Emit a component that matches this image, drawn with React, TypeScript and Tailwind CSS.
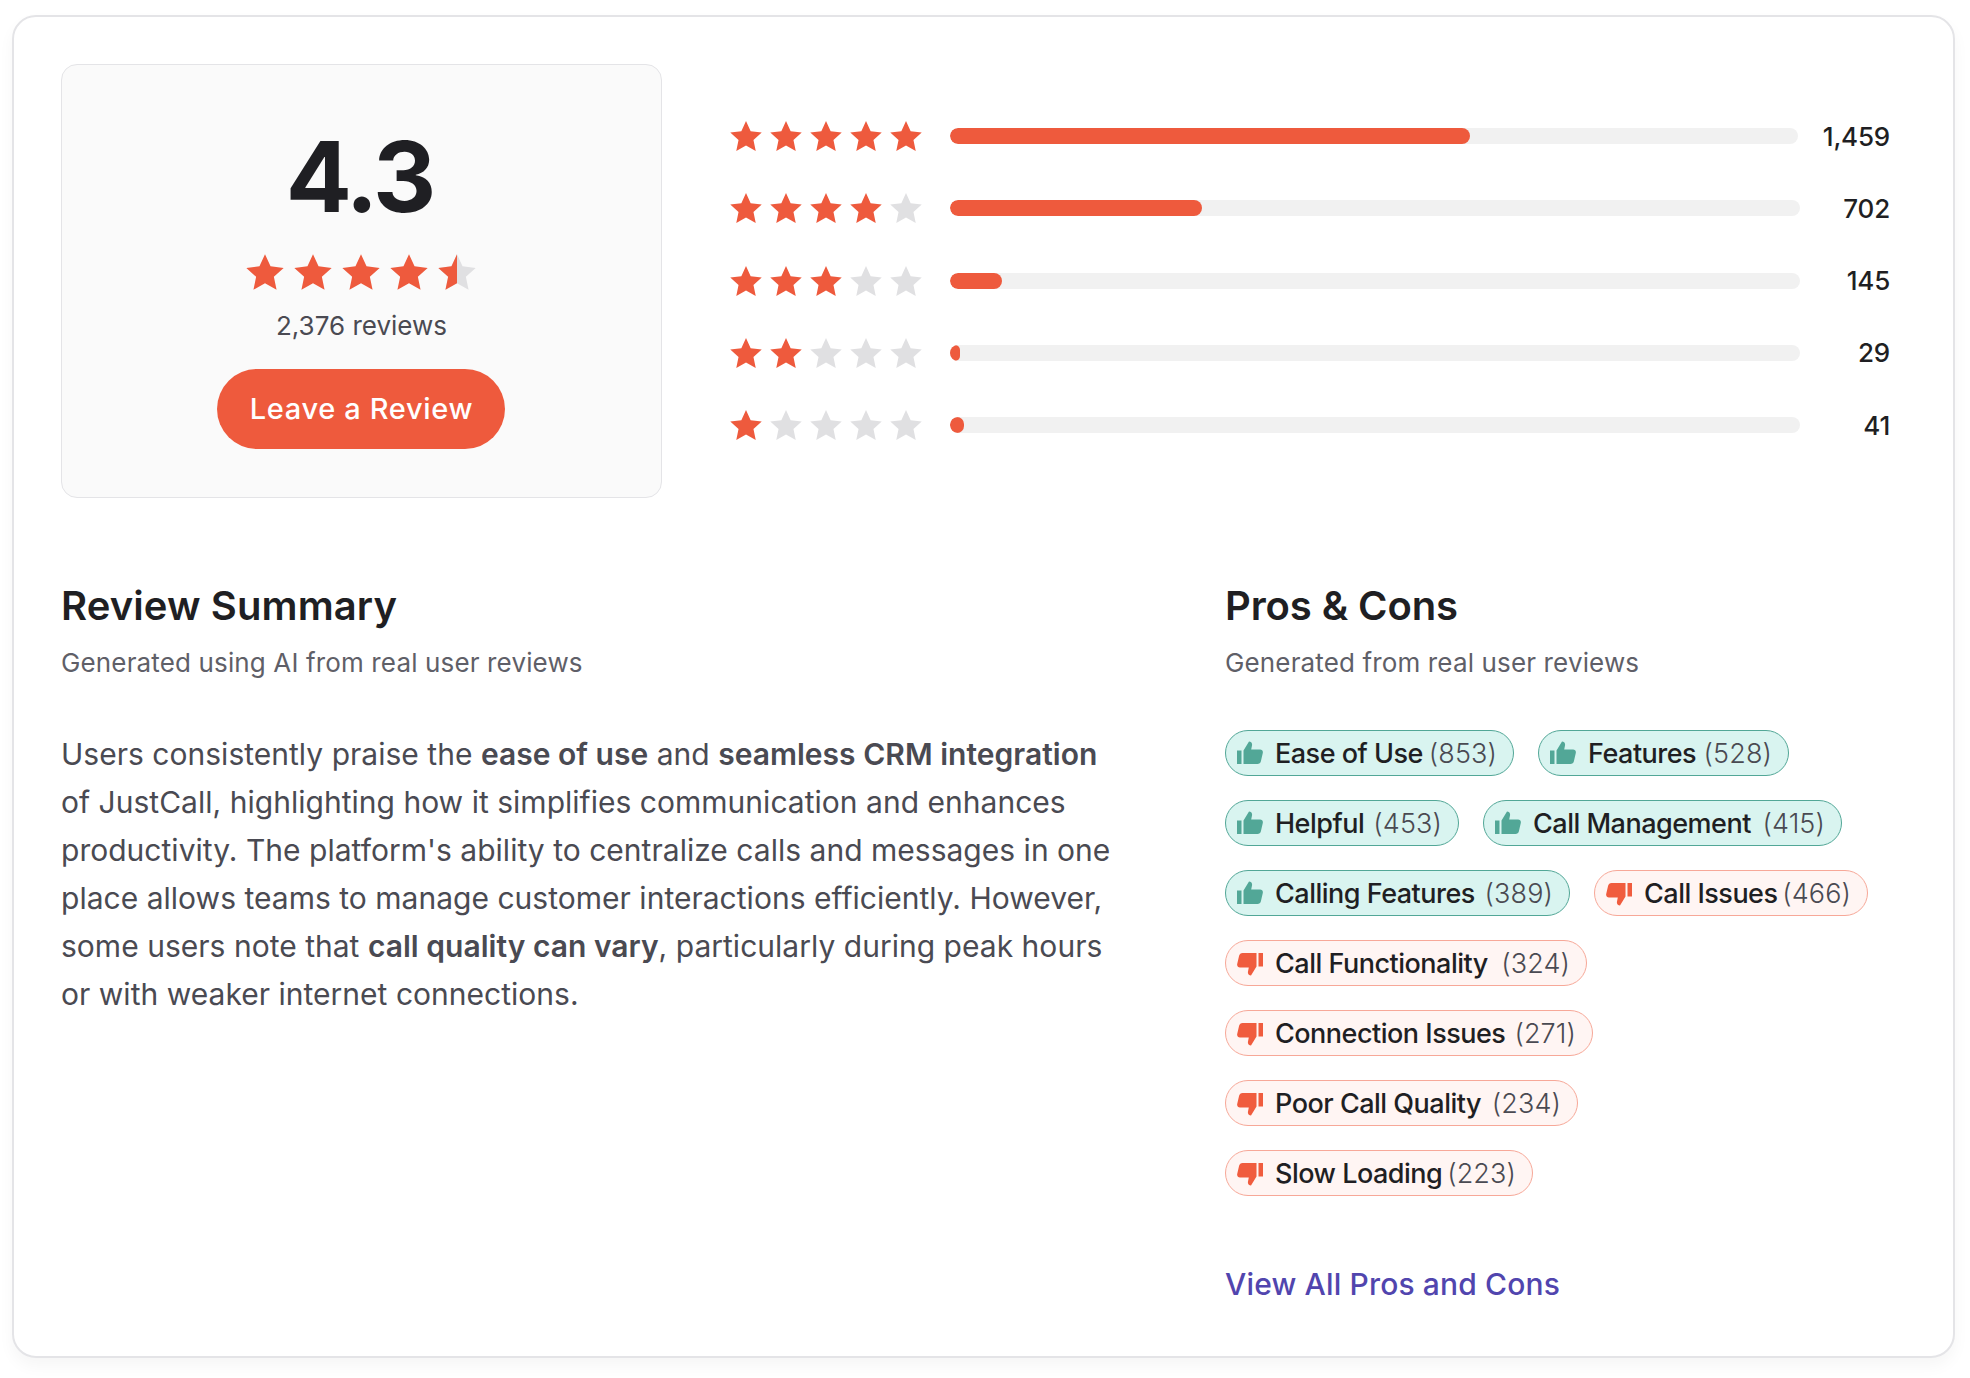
import React from 'react';

const font = { fontFamily: 'Inter, sans-serif' };

const STAR = 'M12 .8l3.5 7.6 8.3 1-6.2 5.6 1.7 8.2L12 19.1l-7.3 4.1 1.700-8.200L.2 9.400l8.300-1z';

const Star = ({ filled, half, className }: { filled?: boolean; half?: boolean; className?: string }) => (
  <svg viewBox="0 0 24 24" className={className}>
    <path d={STAR} fill={filled ? '#EE5A3D' : '#E0E0E2'} />
    {half && <path d="M12 .8v18.300l-7.300 4.100 1.700-8.200L.2 9.400l8.300-1z" fill="#EE5A3D" />}
  </svg>
);

const ThumbUp = () => (
  <svg viewBox="0 0 26 24" className="w-[26px] h-[24px] flex-shrink-0 -mt-[1px]">
    <path d="M0 9.500h4.500V23H0zM6.500 9.500 12 .5c2 0 3.500 1.500 3 4l-.8 4H23c2 0 3.200 1.500 2.800 3.400l-1.900 8.300c-.4 1.700-1.700 2.800-3.400 2.800H6.500z" fill="#52A797" />
  </svg>
);

const ThumbDown = () => (
  <svg viewBox="0 0 26 24" className="w-[26px] h-[24px] flex-shrink-0 mt-[2px]">
    <path d="M26 14.500h-4.500V1H26zM19.500 14.500 14 23.500c-2 0-3.500-1.500-3-4l.8-4H3c-2 0-3.200-1.500-2.800-3.400l1.900-8.300C2.500 2.100 3.800 1 5.500 1h14z" fill="#F05C3E" />
  </svg>
);

const rows = [
  { stars: 5, pct: 'w-[61.3%]', count: '1,459', track: 'w-[848px]' },
  { stars: 4, pct: 'w-[29.6%]', count: '702', track: 'w-[850px]' },
  { stars: 3, pct: 'w-[6.1%]', count: '145', track: 'w-[850px]' },
  { stars: 2, pct: 'w-[1.2%]', count: '29', track: 'w-[850px]' },
  { stars: 1, pct: 'w-[1.7%]', count: '41', track: 'w-[850px]' },
];

const pills: { label: string; n: number; good: boolean; w: string }[][] = [
  [{ label: 'Ease of Use', n: 853, good: true, w: 'w-[289px]' }, { label: 'Features', n: 528, good: true, w: 'w-[251px]' }],
  [{ label: 'Helpful', n: 453, good: true, w: 'w-[234px]' }, { label: 'Call Management', n: 415, good: true, w: 'w-[359px]' }],
  [{ label: 'Calling Features', n: 389, good: true, w: 'w-[345px]' }, { label: 'Call Issues', n: 466, good: false, w: 'w-[274px]' }],
  [{ label: 'Call Functionality', n: 324, good: false, w: 'w-[362px]' }],
  [{ label: 'Connection Issues', n: 271, good: false, w: 'w-[368px]' }],
  [{ label: 'Poor Call Quality', n: 234, good: false, w: 'w-[353px]' }],
  [{ label: 'Slow Loading', n: 223, good: false, w: 'w-[308px]' }],
];

const Pill = ({ label, n, good, w }: { label: string; n: number; good: boolean; w: string }) => (
  <div className={`h-[46px] rounded-full border flex items-center pl-[11px] pr-[16px] ${w} ${good ? 'bg-[#D9F4F0] border-[#52A797]' : 'bg-[#FFF5F3] border-[#F7A898]'}`}>
    {good ? <ThumbUp /> : <ThumbDown />}
    <span className="ml-[12px] mt-[2px] flex-1 text-[27px] tracking-[-0.5px] font-medium text-[#1F1F23] whitespace-nowrap">{label}</span>
    <span className="mt-[2px] text-[27px] tracking-[0.1px] font-light text-[#4A4A52] whitespace-nowrap">({n})</span>
  </div>
);

export default function App() {
  return (
    <div className="w-[1970px] h-[1378px] bg-white pt-[15px] pl-[12px]" style={font}>
      <div className="w-[1943px] h-[1343px] bg-white rounded-[24px] border-2 border-[#E4E4E7] shadow-[0_8px_16px_rgba(0,0,0,0.04)] pt-[47px] pl-[47px]">
        <div className="flex">
          <div className="w-[601px] h-[434px] flex-shrink-0 bg-[#FAFAFA] border border-[#E4E4E7] rounded-[16px] flex flex-col items-center">
            <div className="mt-[52px] mr-[4px] text-[98px] leading-[120px] font-bold tracking-[-3px] text-[#1F1F23]">4.3</div>
            <div className="mt-[16px] mr-[2px] flex gap-[10px]">
              {[0, 1, 2, 3].map(i => <Star key={i} filled className="w-[38px] h-[38px]" />)}
              <Star half className="w-[38px] h-[38px]" />
            </div>
            <div className="mt-[17px] text-[26px] leading-[36px] tracking-[0px] text-[#4A4A52]">2,376 reviews</div>
            <button className="mt-[25px] mr-[2px] pl-[2px] h-[80px] w-[288px] rounded-full bg-[#EE5A3D] text-white text-[29px] font-medium tracking-[0.65px]">Leave a Review</button>
          </div>
          <div className="ml-[68px] w-[1160px] flex flex-col pt-[56px] gap-[40.3px]">
            {rows.map(r => (
              <div key={r.count} className="flex items-center h-[32px]">
                <div className="flex gap-[8px] w-[216px] flex-shrink-0">
                  {[1, 2, 3, 4, 5].map(i => <Star key={i} filled={i <= r.stars} className="w-[32px] h-[32px]" />)}
                </div>
                <div className={`h-[16px] rounded-full bg-[#F1F1F1] overflow-hidden ml-[4px] ${r.track}`}>
                  <div className={`h-full rounded-full bg-[#EE5A3D] ${r.pct}`} />
                </div>
                <div className="flex-1 text-right text-[26px] font-medium tracking-[-0.2px] text-[#1F1F23]">{r.count}</div>
              </div>
            ))}
          </div>
        </div>
        <div className="flex mt-[83px]">
          <div className="w-[1164px] flex-shrink-0">
            <h2 className="text-[40px] leading-[50px] font-semibold tracking-[0.1px] text-[#1F1F23]">Review Summary</h2>
            <p className="mt-[14px] text-[26px] leading-[36px] tracking-[0.14px] text-[#5F5F68]">Generated using AI from real user reviews</p>
            <p className="mt-[49px] text-[30px] leading-[48px] tracking-[0.02px] text-[#4A4A52]">
              Users consistently praise the <b className="font-semibold">ease of use</b> and <b className="font-semibold">seamless CRM integration</b><br />
              of JustCall, highlighting how it simplifies communication and enhances<br />
              productivity. The platform's ability to centralize calls and messages in one<br />
              place allows teams to manage customer interactions efficiently. However,<br />
              some users note that <b className="font-semibold">call quality can vary</b>, particularly during peak hours<br />
              or with weaker internet connections.
            </p>
          </div>
          <div>
            <h2 className="text-[40px] leading-[50px] font-semibold tracking-[-0.1px] text-[#1F1F23]">Pros &amp; Cons</h2>
            <p className="mt-[14px] text-[26px] leading-[36px] tracking-[0.14px] text-[#5F5F68]">Generated from real user reviews</p>
            <div className="mt-[49px] flex flex-col gap-[24px]">
              {pills.map((row, i) => (
                <div key={i} className="flex gap-[24px]">
                  {row.map(p => <Pill key={p.label} {...p} />)}
                </div>
              ))}
            </div>
            <a className="block mt-[68px] text-[30px] leading-[40px] font-medium tracking-[0.15px] text-[#5145AE]">View All Pros and Cons</a>
          </div>
        </div>
      </div>
    </div>
  );
}
